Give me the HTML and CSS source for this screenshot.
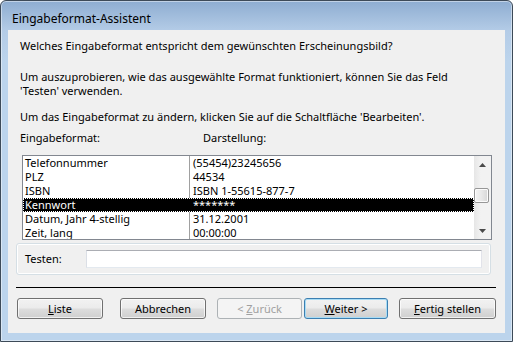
FILE: index.html
```html
<!DOCTYPE html>
<html lang="de">
<head>
    <meta charset="UTF-8">
    <title>Eingabeformat-Assistent</title>
    <link rel="stylesheet" href="styles.css">
</head>
<body>
    <div class="window">
        <div class="titlebar">
            <span class="title">Eingabeformat-Assistent</span>
        </div>
        <div class="client">
            <p class="intro">Welches Eingabeformat entspricht dem gewünschten Erscheinungsbild?</p>
            <p class="hint">Um auszuprobieren, wie das ausgewählte Format funktioniert, können Sie das Feld<br>'Testen' verwenden.</p>
            <p class="hint-edit">Um das Eingabeformat zu ändern, klicken Sie auf die Schaltfläche 'Bearbeiten'.</p>
            <div class="colheads">
                <span class="colhead-name">Eingabeformat:</span>
                <span class="colhead-value">Darstellung:</span>
            </div>
            <div class="listbox">
                <div class="rows">
                    <div class="row"><span class="cell-name">Telefonnummer</span><span class="cell-value">(55454)23245656</span></div>
                    <div class="row"><span class="cell-name">PLZ</span><span class="cell-value">44534</span></div>
                    <div class="row"><span class="cell-name">ISBN</span><span class="cell-value">ISBN 1-55615-877-7</span></div>
                    <div class="row selected"><span class="cell-name">Kennwort</span><span class="cell-value">*******</span></div>
                    <div class="row"><span class="cell-name">Datum, Jahr 4-stellig</span><span class="cell-value">31.12.2001</span></div>
                    <div class="row"><span class="cell-name">Zeit, lang</span><span class="cell-value">00:00:00</span></div>
                </div>
                <div class="scrollbar">
                    <div class="scroll-btn">
                        <svg width="7" height="4" viewBox="0 0 7 4"><polygon points="3.5,0 7,4 0,4" fill="#4a4a4a"/></svg>
                    </div>
                    <div class="scroll-track">
                        <div class="scroll-thumb"></div>
                    </div>
                    <div class="scroll-btn">
                        <svg width="7" height="4" viewBox="0 0 7 4"><polygon points="0,0 7,0 3.5,4" fill="#4a4a4a"/></svg>
                    </div>
                </div>
            </div>
            <div class="testgroup">
                <span class="test-label">Testen:</span>
                <div class="textbox"></div>
            </div>
            <div class="separator"></div>
            <div class="buttons">
                <button class="btn btn-list"><u>L</u>iste</button>
                <button class="btn btn-cancel">Abbrechen</button>
                <button class="btn btn-back" disabled>&lt; <u>Z</u>urück</button>
                <button class="btn btn-next"><u>W</u>eiter &gt;</button>
                <button class="btn btn-finish"><u>F</u>ertig stellen</button>
            </div>
        </div>
    </div>
</body>
</html>
```

FILE: styles.css
```css
html, body {
    margin: 0;
    padding: 0;
    overflow: hidden;
}
body {
    font-family: "Noto Sans", "Open Sans", sans-serif;
    font-size: 11px;
    line-height: 14px;
    color: #000;
    background: #fff;
}
.window {
    box-sizing: border-box;
    width: 513px;
    height: 342px;
    border: 1px solid #3d4a58;
    border-radius: 6px 6px 0 0;
    background: linear-gradient(#8eadd1 0px, #b4cce7 30px, #bcd4ec 60px, #bcd4ec 100%);
    box-shadow: inset 0 0 0 1px rgba(255, 255, 255, 0.45);
    display: flex;
    flex-direction: column;
}
.titlebar {
    height: 29px;
    padding: 11px 0 0 11px;
    box-sizing: border-box;
    font-size: 12px;
}
.client {
    margin: 0 7px 8px 7px;
    height: 303px;
    background: #f0f0f0;
}
p {
    margin: 0;
    padding-left: 12px;
}
.intro {
    padding-top: 9px;
}
.hint {
    margin-top: 17px;
}
.hint-edit {
    margin-top: 12px;
}
.colheads {
    display: flex;
    margin-top: 7px;
    padding-left: 12px;
}
.colhead-name {
    width: 183px;
}
.listbox {
    display: flex;
    margin: 10px 0 0 14px;
    width: 470px;
    height: 85px;
    box-sizing: border-box;
    border: 1px solid #828790;
    background: #fff;
}
.rows {
    flex: 1;
    overflow: hidden;
}
.row {
    display: flex;
    height: 14px;
    white-space: nowrap;
}
.cell-name {
    width: 164px;
    padding-left: 2px;
}
.cell-value {
    padding-left: 3px;
    border-left: 1px solid #a0a0a0;
}
.row.selected {
    background: #000;
    color: #fff;
    outline: 1px dotted #fff;
    outline-offset: -1px;
}
.row.selected .cell-value {
    border-left-color: #000;
}
.scrollbar {
    width: 17px;
    display: flex;
    flex-direction: column;
    background: linear-gradient(to right, #e6e6e6, #f2f2f2 40%, #f2f2f2);
}
.scroll-btn {
    height: 17px;
    display: flex;
    align-items: center;
    justify-content: center;
}
.scroll-track {
    flex: 1;
}
.scroll-thumb {
    margin: 15px 0 0 0;
    width: 15px;
    height: 15px;
    box-sizing: border-box;
    border: 1px solid #979797;
    border-radius: 2px;
    background: linear-gradient(to right, #f4f4f4, #e8e8e8 50%, #d7d7d7);
    box-shadow: inset 0 0 0 1px #fbfbfb;
}
.testgroup {
    display: flex;
    align-items: center;
    margin: 3px 0 0 8px;
    width: 475px;
    height: 32px;
    box-sizing: border-box;
    border: 1px solid #d5dfe5;
    border-radius: 3px;
    box-shadow: inset 0 0 0 1px #fff;
    padding: 0 8px 0 8px;
}
.test-label {
    width: 61px;
}
.textbox {
    flex: 1;
    height: 18px;
    box-sizing: border-box;
    background: #fff;
    border: 1px solid #e2e3ea;
    border-top-color: #abadb3;
    border-left-color: #dbdfe6;
    border-bottom-color: #e3e9ef;
}
.separator {
    margin: 12px 0 0 8px;
    width: 480px;
    height: 1px;
    background: #000;
}
.buttons {
    display: flex;
    margin: 10px 0 0 9px;
}
.btn {
    height: 21px;
    box-sizing: border-box;
    padding: 0;
    font-family: inherit;
    font-size: 11px;
    line-height: 14px;
    color: #000;
    border: 1px solid #707070;
    border-radius: 3px;
    background: linear-gradient(#f2f2f2 0%, #ebebeb 48%, #dddddd 52%, #cfcfcf 100%);
    box-shadow: inset 0 0 0 1px rgba(255, 255, 255, 0.7);
}
.btn u {
    text-decoration-thickness: 1px;
    text-underline-offset: 1px;
}
.btn-list {
    width: 86px;
}
.btn-cancel {
    width: 86px;
    margin-left: 17px;
}
.btn-back {
    width: 85px;
    margin-left: 11px;
    color: #a0a0a0;
    border-color: #adb2b5;
    background: #f4f4f4;
    box-shadow: none;
}
.btn-next {
    width: 84px;
    margin-left: 2px;
    border-color: #3c7fb1;
    box-shadow: inset 0 0 0 1px #a8dcf5;
}
.btn-finish {
    width: 97px;
    margin-left: 11px;
}
```
